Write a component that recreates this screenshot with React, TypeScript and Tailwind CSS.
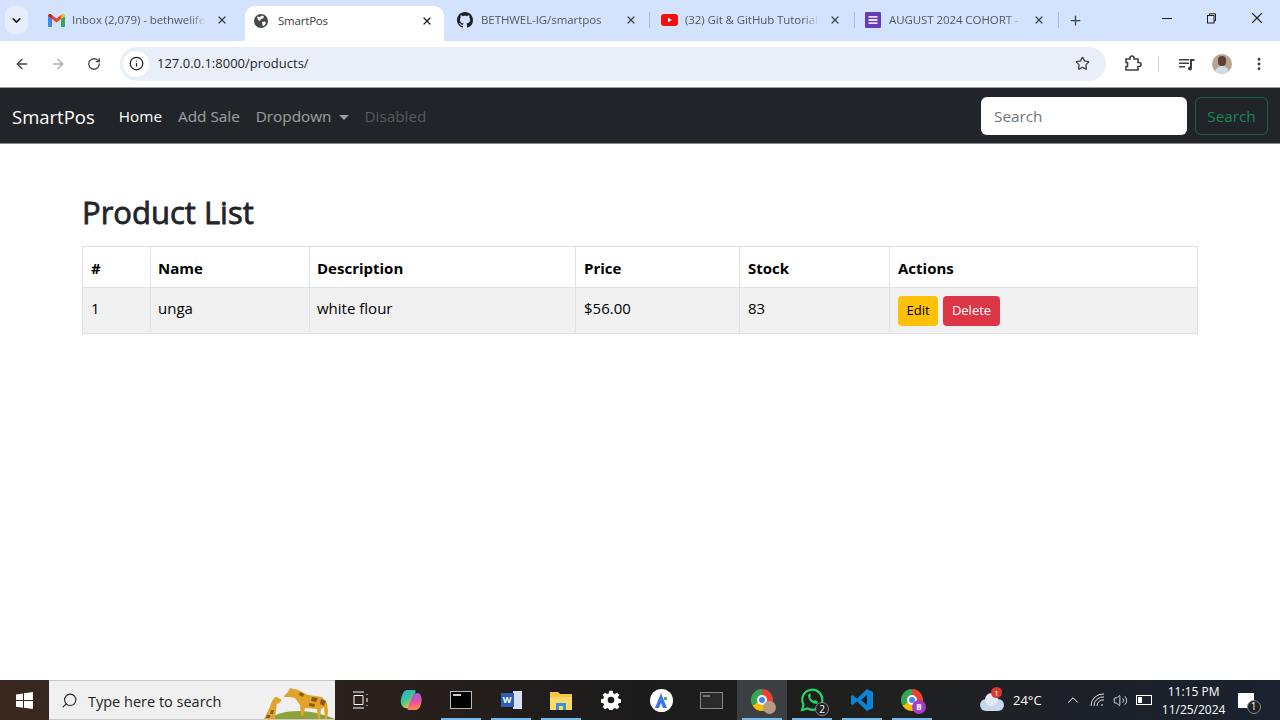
import React from "react";
import { ArrowLeft, ArrowRight, ChevronDown, ChevronUp, Info, MoreVertical, Plus, RotateCw, Search, Star, Volume2, X } from "lucide-react";

const font = "font-['Open_Sans','Noto_Sans',sans-serif]";

function GmailIcon() {
  return (
    <svg width="17" height="13" viewBox="0 0 17 13">
      <path d="M0 2v10a1 1 0 0 0 1 1h3V5z" fill="#4285f4" />
      <path d="M17 2v10a1 1 0 0 1-1 1h-3V5z" fill="#34a853" />
      <path d="M4 5V1l4.500 3.400L13 1v4L8.500 8.400z" fill="#ea4335" />
      <path d="M0 2c0-2 2-2.500 3-1.700L4 1v4L0 2z" fill="#c5221f" />
      <path d="M17 2c0-2-2-2.500-3-1.700L13 1v4l4-3z" fill="#fbbc04" />
    </svg>
  );
}

function GlobeIcon() {
  return (
    <svg width="14" height="14" viewBox="0 0 14 14">
      <circle cx="7" cy="7" r="7" fill="#45494e" />
      <path d="M3 2.500l3 .5 2-1.500 2 1-1 2-2 .5-1 2-2-1zM8 8l3-.5 1 1.500-2 3-1.500-.5z" fill="#fff" />
    </svg>
  );
}

function GithubIcon() {
  return (
    <svg width="16" height="16" viewBox="0 0 16 16" fill="#1f2328">
      <path d="M8 0C3.580 0 0 3.580 0 8c0 3.540 2.290 6.530 5.470 7.590.4.070.55-.17.55-.38 0-.19-.01-.82-.01-1.490-2.010.37-2.530-.49-2.690-.94-.09-.23-.48-.94-.82-1.130-.28-.15-.68-.52-.01-.53.63-.01 1.080.58 1.230.82.720 1.210 1.870.87 2.330.66.070-.52.280-.87.510-1.070-1.780-.2-3.640-.89-3.640-3.950 0-.87.310-1.590.820-2.150-.08-.2-.36-1.020.08-2.120 0 0 .67-.21 2.200.82.640-.18 1.320-.27 2-.27s1.360.09 2 .27c1.530-1.040 2.200-.82 2.200-.82.440 1.100.16 1.920.08 2.120.51.560.82 1.270.82 2.150 0 3.070-1.870 3.750-3.650 3.950.29.250.54.730.54 1.480 0 1.070-.01 1.930-.01 2.200 0 .21.15.46.55.38A8.010 8.010 0 0 0 16 8c0-4.420-3.580-8-8-8z" />
    </svg>
  );
}

function YoutubeIcon() {
  return (
    <svg width="17" height="12" viewBox="0 0 17 12">
      <rect width="17" height="12" rx="3" fill="#f40f0f" />
      <path d="M7 3.700v4.600L10.800 6z" fill="#fff" />
    </svg>
  );
}

function FormsIcon() {
  return (
    <svg width="16" height="16" viewBox="0 0 16 16">
      <rect width="16" height="16" rx="1" fill="#673ab7" />
      <path d="M3.500 4h9v1.800h-9zM3.500 7.100h9v1.800h-9zM3.500 10.200h9V12h-9z" fill="#e8e0f5" />
    </svg>
  );
}

function Tab({ icon, title }: { icon: React.ReactNode; title: string }) {
  return (
    <div className="flex h-[28px] shrink-0 items-center">
      <div className="flex w-[24px] shrink-0 items-center">{icon}</div>
      <span className="w-[134px] shrink-0 overflow-hidden whitespace-nowrap text-[11.5px] tracking-[-0.08px] text-[#54585c] [mask-image:linear-gradient(90deg,#000_88%,transparent)]">
        {title}
      </span>
      <X size={12} strokeWidth={2.4} className="ml-auto text-[#3c4043]" />
    </div>
  );
}

function Divider() {
  return <div className="mb-[13px] h-[16px] w-[1px] shrink-0 bg-[#a8c0e8]" />;
}

function TabStrip() {
  return (
    <div className="flex h-[41px] items-end bg-[#d3e3fd]">
      <div className="mb-[7px] ml-[5px] flex h-[28px] w-[23px] shrink-0 items-center justify-center rounded-[9px] bg-[#e6eefb]">
        <ChevronDown size={13} strokeWidth={3} className="text-[#1f1f1f]" />
      </div>
      <div className="mb-[7px] w-[217px] shrink-0 pl-[20px] pr-[17px]">
        <Tab icon={<GmailIcon />} title="Inbox (2,079) - bethwelife" />
      </div>
      <div className="flex h-[35px] w-[199px] shrink-0 items-center rounded-t-[10px] bg-white pb-[6px] pl-[9px] pr-[11px]">
        <div className="flex w-[24px] items-center"><GlobeIcon /></div>
        <span className="text-[11.5px] tracking-[-0.2px] text-[#3c4043]">SmartPos</span>
        <X size={12} strokeWidth={2.4} className="ml-auto text-[#1f1f1f]" />
      </div>
      <div className="mb-[7px] w-[205px] shrink-0 pl-[13px] pr-[12px]">
        <Tab icon={<GithubIcon />} title="BETHWEL-IG/smartpos" />
      </div>
      <Divider />
      <div className="mb-[7px] w-[204px] shrink-0 pl-[11px] pr-[13px]">
        <Tab icon={<YoutubeIcon />} title="(32) Git & GitHub Tutorial" />
      </div>
      <Divider />
      <div className="mb-[7px] w-[203px] shrink-0 pl-[10px] pr-[13px]">
        <Tab icon={<FormsIcon />} title="AUGUST 2024 COHORT - " />
      </div>
      <Divider />
      <Plus size={15} strokeWidth={2} className="mb-[13px] ml-[9px] text-[#3c4043]" />
      <div className="mb-[14px] ml-auto flex items-center text-[#1f1f1f]">
        <div className="h-[1px] w-[10px] bg-[#1f1f1f]" />
        <svg width="11" height="11" viewBox="0 0 11 11" className="ml-[34px]" fill="none" stroke="#1f1f1f">
          <rect x="1.500" y="2.500" width="6.500" height="7.500" />
          <path d="M3.500 2.500V.8h6v7H8" />
        </svg>
        <X size={18} strokeWidth={1.5} className="ml-[31px] mr-[14px]" />
      </div>
    </div>
  );
}

function ExtensionIcon() {
  return (
    <svg width="18" height="18" viewBox="0 0 18 18" fill="none" stroke="#3c4043" strokeWidth="1.600">
      <path d="M2 4h4V3a2 2 0 0 1 4 0v1h4v3.500h1a2 2 0 0 1 0 4h-1V15H2v-3.500h1.500v-4H2z" />
    </svg>
  );
}

function Toolbar() {
  return (
    <div className="flex h-[47px] items-center border-b border-b-[#9a9a9a] bg-white pb-[1px]">
      <ArrowLeft size={16} strokeWidth={2} className="ml-[14px] text-[#444746]" />
      <ArrowRight size={16} strokeWidth={2} className="ml-[20px] text-[#a9acaf]" />
      <RotateCw size={14} strokeWidth={2.200} className="ml-[21px] text-[#444746]" />
      <div className="ml-[19px] flex h-[34px] w-[986px] items-center rounded-full bg-[#e9eff9] pl-[3px] pr-[16px]">
        <div className="flex h-[26px] w-[26px] items-center justify-center rounded-full bg-white">
          <Info size={15} strokeWidth={2} className="text-[#1f1f1f]" />
        </div>
        <span className="ml-[8px] text-[13px] text-[#1f1f1f]">127.0.0.1:8000/products/</span>
        <Star size={15} strokeWidth={2} className="ml-auto text-[#3c4043]" />
      </div>
      <div className="ml-[18px]"><ExtensionIcon /></div>
      <div className="ml-[16px] h-[16px] w-[1px] bg-[#c4d3ec]" />
      <svg width="16" height="14" viewBox="0 0 16 14" className="ml-[20px]" fill="#3c4043">
        <path d="M0 2h10v1.500H0zM0 5.500h10V7H0zM0 9h6v1.500H0zM11 2h4.500v2H13v7.500a2 2 0 1 1-2-2z" />
      </svg>
      <div className="relative ml-[17px] h-[20px] w-[20px] overflow-hidden rounded-full bg-[#b8a48f]">
        <div className="absolute left-[6px] top-[2px] h-[10px] w-[8px] rounded-full bg-[#5d4032]" />
        <div className="absolute bottom-0 left-[3px] h-[8px] w-[14px] rounded-t-full bg-[#d0dde8]" />
      </div>
      <MoreVertical size={16} strokeWidth={2.400} className="ml-[19px] text-[#3c4043]" />
    </div>
  );
}

function Navbar() {
  return (
    <nav className="flex h-[56px] items-center border-b border-b-[#8b8d90] bg-[#212529] px-[12px] pt-[2px] text-[15.3px]">
      <span className="mr-[16px] text-[18.5px] text-white">SmartPos</span>
      <span className="ml-[8px] text-white">Home</span>
      <span className="ml-[16px] text-white/55">Add Sale</span>
      <span className="ml-[16px] flex items-center text-white/55">
        Dropdown
        <span className="ml-[8px] mt-[1px] h-0 w-0 border-x-[5px] border-t-[5px] border-x-transparent border-t-white/55" />
      </span>
      <span className="ml-[15px] text-white/25">Disabled</span>
      <div className="-mt-[2px] ml-auto flex h-[38px] w-[206px] items-center rounded-[6px] bg-white px-[13px] pt-[2px] text-[#6c757d]">Search</div>
      <div className="-mt-[2px] ml-[8px] flex h-[38px] w-[73px] items-center justify-center rounded-[6px] border border-[#198754]/60 pt-[2px] text-[#198754]">Search</div>
    </nav>
  );
}

function ProductTable() {
  const head = "border border-[#dee2e6] pl-[8px] pr-[8px] pt-[2px] text-left align-middle";
  const cell = "border border-[#dee2e6] pl-[8px] pr-[8px] pt-[9px] text-left align-top";
  return (
    <table className="w-[1115px] table-fixed border-collapse text-[15px] text-black">
      <colgroup>
        <col className="w-[68px]" />
        <col className="w-[159px]" />
        <col className="w-[266px]" />
        <col className="w-[164px]" />
        <col className="w-[150px]" />
        <col className="w-[308px]" />
      </colgroup>
      <thead>
        <tr className="h-[41px] font-bold">
          <th className={head}>#</th>
          <th className={`${head} !pl-[7px]`}>Name</th>
          <th className={`${head} !pl-[7px]`}>Description</th>
          <th className={head}>Price</th>
          <th className={head}>Stock</th>
          <th className={head}>Actions</th>
        </tr>
      </thead>
      <tbody>
        <tr className="h-[46px] bg-[#f1f1f1]">
          <td className={cell}>1</td>
          <td className={`${cell} !pl-[7px]`}>unga</td>
          <td className={`${cell} !pl-[7px]`}>white flour</td>
          <td className={cell}>$56.00</td>
          <td className={cell}>83</td>
          <td className={cell}>
            <div className="-mt-[1px] flex gap-[5px]">
              <span className="flex h-[30px] w-[40px] items-center justify-center rounded-[4px] bg-[#ffc107] text-[13px] text-black">Edit</span>
              <span className="flex h-[30px] w-[57px] items-center justify-center rounded-[4px] bg-[#dc3545] text-[13px] text-white">Delete</span>
            </div>
          </td>
        </tr>
      </tbody>
    </table>
  );
}

function Giraffes() {
  return (
    <svg width="80" height="40" viewBox="0 0 80 40">
      <path d="M14 40c6-5 16-8 30-8s26 4 36 8z" fill="#8ea23c" />
      <path d="M29 17l4-4 2-4 8 2 10 5 14 2 5 6 1 8-1 8h-2l-1-12-3 2-1 10h-2l-1-10-12-1-2 8h-2l-1-11-5-7-5-1-6 0z" fill="#e2a32b" />
      <path d="M45 13l4 2-1 3-4-2zM57 18l6 1-2 4-5-1zM66 20l5 2-2 5-4-2zM54 24l6 1-1 3-5-1z" fill="#8b5a14" />
      <path d="M17 22l3-4 2 0 5 3-3 3-2 1-1 5-1 10H9l5-10z" fill="#e2a32b" />
      <path d="M16 31l3 0-1 4-3 0zM12 36l3 0 0 3-4 0z" fill="#8b5a14" />
    </svg>
  );
}

function WindowsLogo() {
  return (
    <svg width="17" height="17" viewBox="0 0 17 17" fill="#fff">
      <path d="M0 2.400l7-1v6.700H0zM8 1.300L17 0v8.100H8zM0 9h7v6.700l-7-1zM8 9h9v8l-9-1.300z" />
    </svg>
  );
}

function CopilotIcon() {
  return (
    <svg width="22" height="22" viewBox="0 0 22 22">
      <defs>
        <linearGradient id="copilot-a" x1="0" y1="0" x2="0.6" y2="1">
          <stop offset="0" stopColor="#2f9ef0" />
          <stop offset="0.55" stopColor="#3ec98d" />
          <stop offset="1" stopColor="#f4c63a" />
        </linearGradient>
        <linearGradient id="copilot-b" x1="0.4" y1="0" x2="0.6" y2="1">
          <stop offset="0" stopColor="#9a5df0" />
          <stop offset="0.55" stopColor="#ec4f9e" />
          <stop offset="1" stopColor="#f79a3c" />
        </linearGradient>
      </defs>
      <path d="M7 1h7c2 0 2 2 1 3L11 15c-1 3-3 5-6 4C2 18 0 14 1 10 2 5 4 1 7 1z" fill="url(#copilot-a)" />
      <path d="M13 6c2-2 5-3 7-1 2 3 2 7 1 10-1 4-3 6-6 6H9c-2 0-2-2-1-3z" fill="url(#copilot-b)" />
    </svg>
  );
}

function TaskSlot({ children, active, open = true }: { children: React.ReactNode; active?: boolean; open?: boolean }) {
  return (
    <div className={`relative flex h-[40px] w-[50px] shrink-0 items-center justify-center ${active ? "bg-[#3d4043]" : ""}`}>
      {children}
      {open && <div className="absolute inset-x-[5px] bottom-0 h-[2px] bg-[#76b9ed]" />}
    </div>
  );
}

function ChromeIcon({ badge }: { badge: React.ReactNode }) {
  return (
    <div className="relative h-[22px] w-[22px] rounded-full bg-[conic-gradient(#ea4335_0_33%,#fbbc04_33%_66%,#34a853_66%_100%)]">
      <div className="absolute inset-[6px] rounded-full border-2 border-white bg-[#4285f4]" />
      <div className="absolute -bottom-[3px] -right-[3px]">{badge}</div>
    </div>
  );
}

function Taskbar() {
  return (
    <div className="flex h-[40px] items-center bg-[linear-gradient(90deg,#3a2820_0%,#2a201c_28%,#1c1b1b_50%,#20201f_68%,#1a2230_100%)] text-white">
      <div className="flex w-[49px] shrink-0 justify-center"><WindowsLogo /></div>
      <div className="relative flex h-[40px] w-[286px] shrink-0 items-center overflow-hidden border-y border-y-[#c8c8c8] bg-[#f0f0f0] pl-[12px]">
        <Search size={17} strokeWidth={1.500} className="-scale-x-100 text-[#222]" />
        <span className="ml-[10px] pt-[3px] text-[14.5px] text-[#222]">Type here to search</span>
        <div className="absolute bottom-0 right-0"><Giraffes /></div>
      </div>
      <div className="ml-[1px] flex w-[50px] shrink-0 justify-center">
        <svg width="18" height="18" viewBox="0 0 18 18" fill="none" stroke="#fff">
          <path d="M1 1h11M1 17h11M2 4.500h9v9H2zM15 3v1M15 7v4M15 14v1" />
        </svg>
      </div>
      <div className="flex w-[50px] shrink-0 justify-center"><CopilotIcon /></div>
      <TaskSlot>
        <div className="flex h-[18px] w-[22px] items-start border border-[#bbb] bg-black p-[2px]">
          <div className="h-[2px] w-[8px] bg-[#ccc]" />
        </div>
      </TaskSlot>
      <TaskSlot>
        <div className="flex h-[20px] w-[21px] items-center">
          <span className="z-10 flex h-[14px] w-[13px] items-center justify-center bg-[#2b5fb3] text-[9px] font-bold">W</span>
          <span className="-ml-[1px] h-[18px] w-[9px] bg-[#d5e2f5]" />
        </div>
      </TaskSlot>
      <TaskSlot>
        <svg width="22" height="20" viewBox="0 0 22 20">
          <path d="M0 2h8l2 2h12v16H0z" fill="#f6c544" />
          <path d="M0 7h22v13H0z" fill="#fcd868" />
          <path d="M6 20v-7h10v7h-3v-4H9v4z" fill="#3c8fd6" />
        </svg>
      </TaskSlot>
      <TaskSlot open={false}>
        <svg width="20" height="20" viewBox="0 0 24 24" fill="#fff">
          <path fillRule="evenodd" d="M10 1h4l.6 3 2 .9 2.600-1.700 2.800 2.800-1.700 2.600.9 2 3 .6v4l-3 .6-.9 2 1.700 2.600-2.800 2.800-2.600-1.700-2 .9-.6 3h-4l-.6-3-2-.9-2.600 1.700-2.800-2.800 1.700-2.600-.9-2-3-.6v-4l3-.6.9-2-1.700-2.600 2.800-2.800 2.600 1.700 2-.9zM12 8a4 4 0 1 0 0 8 4 4 0 0 0 0-8z" />
        </svg>
      </TaskSlot>
      <TaskSlot open={false}>
        <div className="flex h-[23px] w-[23px] items-center justify-center rounded-full bg-white">
          <svg width="14" height="15" viewBox="0 0 14 15">
            <path d="M7 0l6 15H9L7 10l-2 5H1z" fill="#3b78e7" />
            <path d="M10 4h3v3h-3z" fill="#4caf50" />
          </svg>
        </div>
      </TaskSlot>
      <div className="mr-[1px]">
        <TaskSlot open={false}>
          <div className="flex h-[17px] w-[23px] items-start border border-[#888] bg-[#2a2a2a] p-[2px]">
            <div className="h-[2px] w-[7px] bg-[#777]" />
          </div>
        </TaskSlot>
      </div>
      <TaskSlot active>
        <ChromeIcon badge={<div className="h-[13px] w-[13px] rounded-full bg-[#b89a84]" />} />
      </TaskSlot>
      <TaskSlot>
        <div className="relative">
          <svg width="24" height="24" viewBox="0 0 24 24" fill="none" stroke="#25d366" strokeWidth="2.200">
            <path d="M2 22l1.500-5.500A10 10 0 1 1 7.500 20.500z" />
            <path d="M8 7c0 5 4 9 9 9l1-2.500-3-1.500-1 1c-2-1-3-2-4-4l1-1-1-3z" fill="#25d366" stroke="none" />
          </svg>
          <span className="absolute -bottom-[4px] -right-[5px] flex h-[14px] w-[14px] items-center justify-center rounded-full border border-[#888] bg-[#222] text-[10px]">2</span>
        </div>
      </TaskSlot>
      <TaskSlot>
        <svg width="24" height="24" viewBox="0 0 24 24">
          <path d="M17 1l6 3v16l-6 3-10-9.500L2.500 17 1 16v-8l1.500-1L7 10.500z" fill="#0a84d6" />
          <path d="M17 7l-6 5 6 5z" fill="#1c1b1b" />
        </svg>
      </TaskSlot>
      <TaskSlot>
        <ChromeIcon badge={<div className="flex h-[14px] w-[14px] items-center justify-center rounded-full bg-[#a43fc4] text-[8px] font-bold">B</div>} />
      </TaskSlot>
      <div className="ml-[43px] flex items-center">
        <div className="relative h-[22px] w-[24px]">
          <div className="absolute bottom-0 h-[12px] w-[24px] rounded-full bg-[#c6d8ef]" />
          <div className="absolute bottom-[5px] left-[5px] h-[13px] w-[13px] rounded-full bg-[#e0eaf6]" />
          <div className="absolute -top-[2px] left-[11px] flex h-[11px] w-[11px] items-center justify-center rounded-full bg-[#d93a2b] text-[8px]">1</div>
        </div>
        <span className="ml-[9px] pt-[2px] text-[13px]">24°C</span>
      </div>
      <ChevronUp size={18} strokeWidth={1.300} className="ml-[22px]" />
      <svg width="16" height="14" viewBox="0 0 16 14" className="ml-[8px]" fill="none" stroke="#ddd" strokeWidth="1">
        <path d="M1 13A12 12 0 0 1 14 1M4 13a9 9 0 0 1 10-9M7 13a6 6 0 0 1 7-6M11 12h2" />
      </svg>
      <Volume2 size={15} strokeWidth={1.300} className="ml-[7px]" />
      <svg width="16" height="10" viewBox="0 0 16 10" className="ml-[8px]" fill="none" stroke="#fff">
        <rect x=".5" y=".5" width="15" height="9" />
        <rect x="2" y="2" width="4" height="6" fill="#fff" stroke="none" />
      </svg>
      <div className="ml-[7px] flex w-[70px] flex-col items-center pt-[2px] text-[12px] leading-[18px]">
        <span>11:15 PM</span>
        <span>11/25/2024</span>
      </div>
      <div className="relative ml-[9px] h-[15px] w-[16px] bg-white">
        <span className="absolute -bottom-[6px] -right-[7px] flex h-[14px] w-[14px] items-center justify-center rounded-full border border-[#888] bg-[#222] text-[10px]">1</span>
      </div>
    </div>
  );
}

export default function App() {
  return (
    <div className={`flex h-[720px] w-[1280px] flex-col overflow-hidden bg-white ${font}`}>
      <TabStrip />
      <Toolbar />
      <Navbar />
      <main className="flex-1 px-[82px] pt-[45px]">
        <h1 className="mb-[11px] text-[31px] font-normal leading-[46px] text-[#212529] [-webkit-text-stroke:0.8px_#212529]">Product List</h1>
        <ProductTable />
      </main>
      <Taskbar />
    </div>
  );
}
